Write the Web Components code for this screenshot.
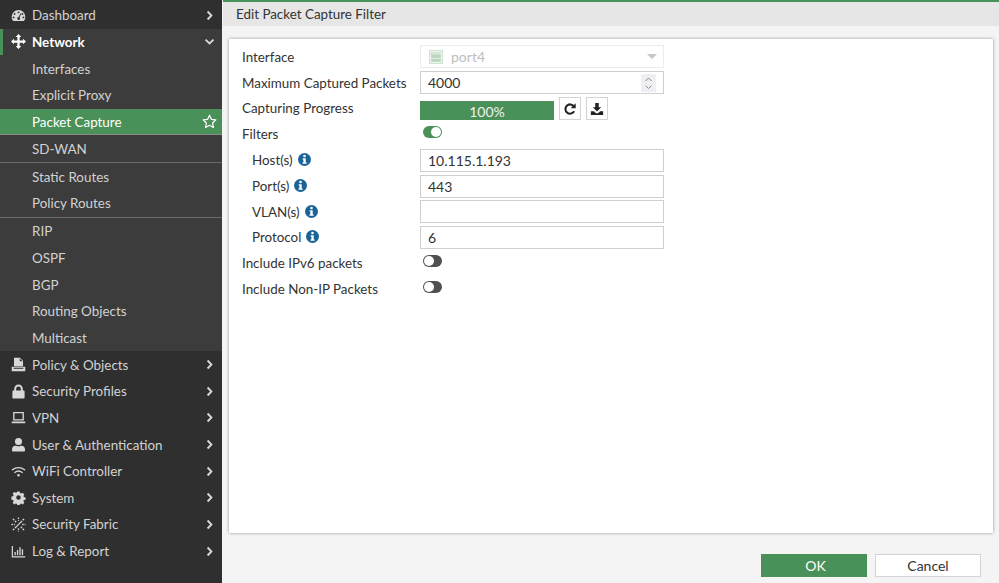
<!DOCTYPE html>
<html>
<head>
<meta charset="utf-8">
<title>Edit Packet Capture Filter</title>
<style>
    html, body { margin: 0; height: 100%; overflow: hidden; }
    body { font: 14px Lato, "Open Sans", sans-serif; }
</style>
</head>
<body>
<fg-app></fg-app>

<script>
// small svg icons, all on a 16x16 box unless noted
const ICONS = {
    dashboard: '<path fill="currentColor" fill-rule="evenodd" d="M8 2.200a7.300 7.300 0 0 0-7.300 7.300c0 1.500.4 2.800 1.200 3.900.2.200.4.400.7.400h10.800c.3 0 .5-.2.7-.4.8-1.100 1.200-2.400 1.200-3.900A7.300 7.300 0 0 0 8 2.200zM8 3.600a1 1 0 1 1 0 2 1 1 0 0 1 0-2zM3.800 5.300a1 1 0 1 1 0 2 1 1 0 0 1 0-2zM12.200 5.300a1 1 0 1 1 0 2 1 1 0 0 1 0-2zM2.700 9a1 1 0 1 1 0 2 1 1 0 0 1 0-2zM13.300 9a1 1 0 1 1 0 2 1 1 0 0 1 0-2zM10.300 5.500l.8.400-2 4.100a1.500 1.500 0 1 1-.9-.3z"/>',
    network: '<path fill="currentColor" d="M8 0l3 3.100H9.200v3.700h3.700V5l3.100 3-3.100 3V9.200H9.200v3.700H11L8 16l-3-3.100h1.800V9.200H3.100V11L0 8l3.100-3v1.800h3.700V3.100H5z"/>',
    policy: '<path fill="currentColor" fill-rule="evenodd" d="M3.200.8h6.300l3.300 3.300v5.700H3.200zM9.300 1.600v2.900h3zM.8 10.500h2v2h10.400v-2h2v4.700H.8zM2.800 10.500h10.400v1H2.800z"/>',
    lock: '<path fill="currentColor" fill-rule="evenodd" d="M8 .6a4.600 4.600 0 0 0-4.600 4.600V7H2.600C2 7 1.500 7.500 1.500 8.100v6.300c0 .6.500 1.100 1.100 1.100h10.800c.6 0 1.100-.5 1.100-1.100V8.100c0-.6-.5-1.100-1.100-1.100h-.8V5.200A4.600 4.600 0 0 0 8 .6zM5.500 7V5.200a2.500 2.500 0 0 1 5 0V7z"/>',
    laptop: '<path fill="currentColor" fill-rule="evenodd" d="M2.300 2h11.400v9.200H2.300zM3.700 3.400v6.400h8.600V3.400zM.8 12.200h14.400v1.800H.8z"/>',
    user: '<path fill="currentColor" d="M8 1a3.800 3.800 0 1 1 0 7.600A3.800 3.800 0 0 1 8 1zM2 15.500c-.5 0-.9-.4-.9-.9v-1.800c0-2 1.600-3.500 3.500-3.500h.8c.8.400 1.700.6 2.600.6s1.800-.2 2.600-.6h.8c1.900 0 3.500 1.500 3.500 3.500v1.800c0 .5-.4.9-.9.900z"/>',
    wifi: '<g fill="none" stroke="currentColor" stroke-width="1.400" stroke-linecap="round"><path d="M1.500 6.200c3.800-3 9.200-3 13 0"/><path d="M4 9c2.400-1.900 5.600-1.900 8 0"/></g><circle cx="8" cy="12" r="1.300" fill="currentColor"/>',
    gear: '<path fill="currentColor" fill-rule="evenodd" d="M6.600.8h2.800l.4 2 1.300.6 1.800-1 2 2-1.100 1.800.6 1.300 2 .4v2.800l-2 .4-.6 1.300 1.100 1.800-2 2-1.800-1.100-1.300.6-.4 2H6.600l-.4-2-1.300-.6-1.800 1.100-2-2 1.100-1.800-.6-1.300-2-.4V6.900l2-.4.6-1.300-1.100-1.800 2-2 1.800 1 1.300-.6zM8 5.400a2.700 2.700 0 1 0 0 5.400 2.700 2.700 0 0 0 0-5.400z" transform="translate(.8 .8) scale(.9)"/>',
    fabric: '<g fill="none" stroke="currentColor" stroke-width="1.400"><path d="M2 2l3.600 3.600M14 2l-3.600 3.600M2 14l3.600-3.600M14 14l-3.600-3.600" stroke-dasharray="2.200 1"/><path d="M8 .5v3.500M8 12v3.500M.5 8h3.500M12 8h3.500" stroke-dasharray="1.600 1"/><path d="M5.500 10.500l5-5"/></g>',
    report: '<path fill="currentColor" d="M.8 2h1.300v11h13.100v1.400H.8zM3.700 8.500h1.400V12H3.700zM6.300 6.500h1.400V12H6.300zM8.900 3.500h1.400V12H8.900zM11.500 5.500h1.400V12h-1.400z"/>',
    chevronRight: '<path fill="none" stroke="currentColor" stroke-width="2.700" d="M5.200 2.200L10.800 8l-5.600 5.800"/>',
    chevronDown: '<path fill="none" stroke="currentColor" stroke-width="2.700" d="M2.200 5.200L8 10.800l5.800-5.600"/>',
    star: '<path fill="none" stroke="currentColor" stroke-width="1.300" stroke-linejoin="round" d="M8 1.300l2 4.400 4.800.6-3.500 3.300.9 4.800L8 12l-4.200 2.400.9-4.800L1.200 6.300 6 5.700z"/>',
    refresh: '<path fill="none" stroke="currentColor" stroke-width="2.400" d="M12.700 10.600A5.300 5.300 0 1 1 12.400 5"/><path fill="currentColor" d="M14.500 1.500v5.700H8.800z"/>',
    download: '<path fill="currentColor" d="M6 1.200h4V6h2.800L8 10.800 3.200 6H6zM1 10.500h3.500L6.800 12.800h2.400l2.300-2.300H15v4.300H1z"/>',
    port: '<rect x=".5" y=".5" width="15" height="15" fill="#eef5ee" stroke="#c9dfca"/><path fill="#b9d5bb" d="M2.500 2.500h11v11h-11z"/><path stroke="#eef5ee" d="M4.500 2.500v3M6.500 2.500v3M8.500 2.500v3M10.500 2.500v3M12.500 2.500v3M2.500 9.500h11"/>'
};

function icon(name, size) {
    return `<svg viewBox="0 0 16 16" width="${size}" height="${size}" aria-hidden="true">${ICONS[name]}</svg>`;
}

class FgNavItem extends HTMLElement {
    constructor() {
        super();
        const shadowRoot = this.attachShadow({ mode: 'open' });
        const iconName = this.getAttribute('icon');
        const arrow = this.getAttribute('arrow');
        shadowRoot.innerHTML = `
            <style>
                :host {
                    display: flex;
                    align-items: center;
                    height: 26.67px;
                    box-sizing: border-box;
                    padding-left: 32px;
                    position: relative;
                    color: #d2d2d2;
                    font-size: 13.4px;
                    white-space: nowrap;
                }
                :host([icon]) { padding-left: 11px; }
                :host([active]) { color: #fff; font-weight: 700; box-shadow: inset 3px 0 0 #4a9159; }
                :host([selected]) { color: #fff; background: #4a9159; box-shadow: inset 0 -1px 0 #8a8a8a; }
                :host([divider]) { height: 28px; border-bottom: 1.33px solid #6b6b6b; }
                .icon { display: flex; width: 21px; height: 15px; flex: none; color: #d8d8d8; }
                :host([active]) .icon { color: #fff; }
                .end { margin-left: auto; margin-right: 7px; display: flex; color: #d8d8d8; }
                :host([selected]) .end { color: #fff; margin-right: 5px; }
            </style>
            ${iconName ? `<span class="icon">${icon(iconName, 15)}</span>` : ''}
            <slot></slot>
            ${arrow ? `<span class="end">${icon(arrow, arrow === 'star' ? 15 : 11)}</span>` : ''}
        `;
    }
}

class FgSidebar extends HTMLElement {
    constructor() {
        super();
        const shadowRoot = this.attachShadow({ mode: 'open' });
        shadowRoot.innerHTML = `
            <style>
                :host {
                    display: block;
                    width: 222px;
                    height: 100%;
                    box-sizing: border-box;
                    padding-top: 2px;
                    background: #2f2f2f;
                }
                .open { background: #3c3c3c; }
            </style>
            <fg-nav-item icon="dashboard" arrow="chevronRight">Dashboard</fg-nav-item>
            <div class="open">
                <fg-nav-item icon="network" arrow="chevronDown" active>Network</fg-nav-item>
                <fg-nav-item>Interfaces</fg-nav-item>
                <fg-nav-item>Explicit Proxy</fg-nav-item>
                <fg-nav-item selected arrow="star">Packet Capture</fg-nav-item>
                <fg-nav-item divider>SD-WAN</fg-nav-item>
                <fg-nav-item>Static Routes</fg-nav-item>
                <fg-nav-item divider>Policy Routes</fg-nav-item>
                <fg-nav-item>RIP</fg-nav-item>
                <fg-nav-item>OSPF</fg-nav-item>
                <fg-nav-item>BGP</fg-nav-item>
                <fg-nav-item>Routing Objects</fg-nav-item>
                <fg-nav-item>Multicast</fg-nav-item>
            </div>
            <fg-nav-item icon="policy" arrow="chevronRight">Policy &amp; Objects</fg-nav-item>
            <fg-nav-item icon="lock" arrow="chevronRight">Security Profiles</fg-nav-item>
            <fg-nav-item icon="laptop" arrow="chevronRight">VPN</fg-nav-item>
            <fg-nav-item icon="user" arrow="chevronRight">User &amp; Authentication</fg-nav-item>
            <fg-nav-item icon="wifi" arrow="chevronRight">WiFi Controller</fg-nav-item>
            <fg-nav-item icon="gear" arrow="chevronRight">System</fg-nav-item>
            <fg-nav-item icon="fabric" arrow="chevronRight">Security Fabric</fg-nav-item>
            <fg-nav-item icon="report" arrow="chevronRight">Log &amp; Report</fg-nav-item>
        `;
    }
}

class FgRow extends HTMLElement {
    constructor() {
        super();
        const shadowRoot = this.attachShadow({ mode: 'open' });
        const label = this.getAttribute('label');
        const info = this.hasAttribute('info');
        shadowRoot.innerHTML = `
            <style>
                :host {
                    display: grid;
                    grid-template-columns: 178px 244px;
                    align-items: center;
                    height: 25.7px;
                    color: #333;
                }
                :host([sub]) .label { padding-left: 10px; }
                .label { display: flex; align-items: center; gap: 5px; white-space: nowrap; font-size: 13.4px; }
                .info { width: 13px; height: 13px; flex: none; margin-top: -1px; }
            </style>
            <div class="label">${label}${info ? `<svg class="info" viewBox="0 0 14 14" aria-hidden="true"><circle cx="7" cy="7" r="7" fill="#1a6396"/><circle cx="7" cy="3.300" r="1.400" fill="#fff"/><path fill="#fff" d="M5 5.600h3.300v4.700h1v1.400H4.800v-1.400h1V7H5z"/></svg>` : ''}</div>
            <div><slot></slot></div>
        `;
    }
}

class FgInput extends HTMLElement {
    constructor() {
        super();
        const shadowRoot = this.attachShadow({ mode: 'open' });
        shadowRoot.innerHTML = `
            <style>
                :host {
                    display: flex;
                    align-items: center;
                    height: 23px;
                    box-sizing: border-box;
                    padding: 0 7px;
                    background: #fff;
                    border: 1px solid #cfcfcf;
                    color: #333;
                }
                :host([disabled]) { border-color: #ececec; color: #bdbdbd; gap: 8px; padding-left: 8px; }
                .caret { margin-left: auto; margin-right: -1px; width: 0; height: 0; border: 5px solid transparent; border-top: 5px solid #c6c6c6; border-bottom: 0; }
                .spin { margin-left: auto; margin-right: 0; width: 15px; height: 18px; background: #eeeef3; display: flex; }
            </style>
            <slot name="prefix"></slot>
            <slot></slot>
            ${this.hasAttribute('select') ? '<span class="caret"></span>' : ''}
            ${this.hasAttribute('number') ? `<span class="spin"><svg viewBox="0 0 15 18" width="15" height="18" aria-hidden="true"><path fill="none" stroke="#8c8c92" d="M4.500 7l3-3 3 3M4.500 11.500l3 3 3-3"/></svg></span>` : ''}
        `;
    }
}

class FgToggle extends HTMLElement {
    constructor() {
        super();
        const shadowRoot = this.attachShadow({ mode: 'open' });
        shadowRoot.innerHTML = `
            <style>
                :host {
                    display: block;
                    width: 19px;
                    height: 12px;
                    margin: -4px 0 0 3px;
                    border-radius: 6px;
                    background: #505050;
                    position: relative;
                }
                :host([on]) { background: #4a9159; margin-top: -3px; }
                i {
                    position: absolute;
                    top: 1px;
                    left: 1px;
                    width: 10px;
                    height: 10px;
                    border-radius: 50%;
                    background: #fff;
                }
                :host([on]) i { left: 8px; }
            </style>
            <i></i>
        `;
    }
}

class FgIconButton extends HTMLElement {
    constructor() {
        super();
        const shadowRoot = this.attachShadow({ mode: 'open' });
        shadowRoot.innerHTML = `
            <style>
                :host {
                    display: flex;
                    align-items: center;
                    justify-content: center;
                    width: 22px;
                    height: 23px;
                    box-sizing: border-box;
                    background: #fff;
                    border: 1px solid #d4d4d4;
                    color: #222;
                }
            </style>
            ${icon(this.getAttribute('icon'), 14)}
        `;
    }
}

class FgProgress extends HTMLElement {
    constructor() {
        super();
        const shadowRoot = this.attachShadow({ mode: 'open' });
        shadowRoot.innerHTML = `
            <style>
                :host { display: flex; align-items: flex-end; gap: 5px; margin-top: 1.5px; }
                .bar {
                    width: 134px;
                    height: 19px;
                    background: #4a9159;
                    color: #f1f1f1;
                    line-height: 21px;
                    text-align: center;
                }
            </style>
            <div class="bar"><slot></slot></div>
            <fg-icon-button icon="refresh"></fg-icon-button>
            <fg-icon-button icon="download"></fg-icon-button>
        `;
    }
}

class FgButton extends HTMLElement {
    constructor() {
        super();
        const shadowRoot = this.attachShadow({ mode: 'open' });
        shadowRoot.innerHTML = `
            <style>
                :host {
                    display: flex;
                    align-items: center;
                    justify-content: center;
                    width: 106px;
                    height: 23px;
                    box-sizing: border-box;
                    background: #fff;
                    border: 1px solid #d4d4d4;
                    color: #333;
                }
                :host([primary]) { background: #4a9159; border-color: #4a9159; color: #fff; padding-left: 3px; }
            </style>
            <slot></slot>
        `;
    }
}

class FgApp extends HTMLElement {
    constructor() {
        super();
        const shadowRoot = this.attachShadow({ mode: 'open' });
        shadowRoot.innerHTML = `
            <style>
                :host {
                    display: flex;
                    height: 583px;
                    background: #f4f4f4;
                    font: 14px Lato, "Open Sans", sans-serif;
                }
                main { flex: 1; display: flex; flex-direction: column; min-width: 0; border-top: 2px solid #4a9159; margin-left: 1px; }
                header { height: 24px; line-height: 25px; padding-left: 13px; background: #e6e6e6; color: #333; flex: none; font-size: 13.4px; }
                .body { flex: 1; display: flex; flex-direction: column; padding: 13px 6px 0 6px; min-height: 0; }
                .card {
                    height: 494px;
                    box-sizing: border-box;
                    padding: 5px 13px;
                    background: #fff;
                    box-shadow: 0 0 3px rgba(0, 0, 0, .4);
                }
                .filters { margin-top: .8px; }
                footer { display: flex; justify-content: flex-end; gap: 8px; padding: 21px 12px 0 0; }
                .prefix { display: flex; }
            </style>
            <fg-sidebar></fg-sidebar>
            <main>
                <header>Edit Packet Capture Filter</header>
                <div class="body">
                    <section class="card">
                        <fg-row label="Interface">
                            <fg-input disabled select><span class="prefix" slot="prefix">${icon('port', 14)}</span>port4</fg-input>
                        </fg-row>
                        <fg-row label="Maximum Captured Packets"><fg-input number>4000</fg-input></fg-row>
                        <fg-row label="Capturing Progress"><fg-progress>100%</fg-progress></fg-row>
                        <fg-row label="Filters"><fg-toggle on></fg-toggle></fg-row>
                        <div class="filters">
                            <fg-row label="Host(s)" sub info><fg-input>10.115.1.193</fg-input></fg-row>
                            <fg-row label="Port(s)" sub info><fg-input>443</fg-input></fg-row>
                            <fg-row label="VLAN(s)" sub info><fg-input></fg-input></fg-row>
                            <fg-row label="Protocol" sub info><fg-input>6</fg-input></fg-row>
                        </div>
                        <fg-row label="Include IPv6 packets"><fg-toggle></fg-toggle></fg-row>
                        <fg-row label="Include Non-IP Packets"><fg-toggle></fg-toggle></fg-row>
                    </section>
                    <footer>
                        <fg-button primary>OK</fg-button>
                        <fg-button>Cancel</fg-button>
                    </footer>
                </div>
            </main>
        `;
    }
}

// children first so the upgrade order stays simple
customElements.define('fg-nav-item', FgNavItem);
customElements.define('fg-sidebar', FgSidebar);
customElements.define('fg-row', FgRow);
customElements.define('fg-input', FgInput);
customElements.define('fg-toggle', FgToggle);
customElements.define('fg-icon-button', FgIconButton);
customElements.define('fg-progress', FgProgress);
customElements.define('fg-button', FgButton);
customElements.define('fg-app', FgApp);
</script>
</body>
</html>
